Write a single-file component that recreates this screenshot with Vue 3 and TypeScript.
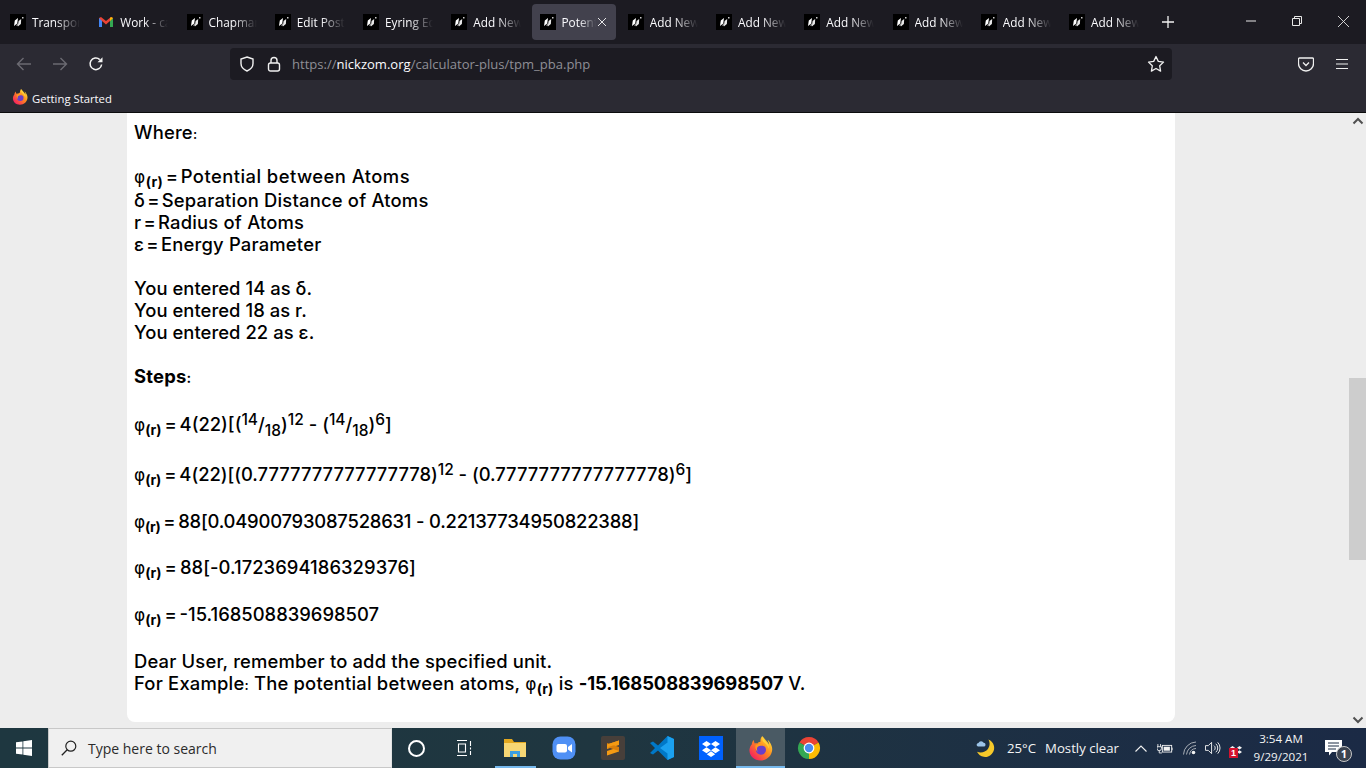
<script setup lang="ts">
interface Tab { title: string; active?: boolean; gmail?: boolean }
const tabs: Tab[] = [
  { title: 'Transport Phenomena' },
  { title: 'Work - cal', gmail: true },
  { title: 'Chapman Enskog' },
  { title: 'Edit Post' },
  { title: 'Eyring Equation' },
  { title: 'Add New Post' },
  { title: 'Potential', active: true },
  { title: 'Add New Post' },
  { title: 'Add New Post' },
  { title: 'Add New Post' },
  { title: 'Add New Post' },
  { title: 'Add New Post' },
  { title: 'Add New Post' }
]
</script>

<template>
  <div class="screen">
    <header class="chrome">
      <div class="tabbar">
        <div class="tabs">
          <div v-for="(t, i) in tabs" :key="i" class="tab" :class="{ active: t.active }">
            <svg v-if="t.gmail" class="fav" viewBox="0 0 16 16">
              <path d="M1 13V4l2-1 5 4 5-4 2 1v9h-3V7L8 10.500 4 7v6z" fill="#ea4335" />
              <path d="M1 13V4l3 3v6z" fill="#4285f4" />
              <path d="M12 13V7l3-3v9z" fill="#34a853" />
              <path d="M12 7l3-3-2-1-1 1z" fill="#fbbc04" />
            </svg>
            <svg v-else class="fav" viewBox="0 0 16 16">
              <rect width="16" height="16" fill="#000" />
              <path d="M4 12l.8-5.500L8 4l-.8 5.500z" fill="#fff" />
              <path d="M7.800 12.500l.8-5.500 2.600-2-.3 5z" fill="#e8e8e8" />
              <path d="M6 11.500l2-2.500v3z" fill="#999" />
              <rect x="12" y="3" width="1.500" height="1.500" fill="#ccc" />
            </svg>
            <span class="tab-title">{{ t.title }}</span>
            <svg v-if="t.active" class="tab-x" viewBox="0 0 10 10">
              <path d="M1 1l8 8M9 1l-8 8" stroke="#e6e6e8" stroke-width="1" fill="none" />
            </svg>
          </div>
          <svg class="plus" viewBox="0 0 12 12">
            <path d="M6 0v12M0 6h12" stroke="#f2f2f2" stroke-width="1.300" />
          </svg>
        </div>
        <div class="winctl">
          <div class="winbtn">
            <svg viewBox="0 0 10 10" width="10" height="10"><path d="M0 5h10" stroke="#e8e8e8" /></svg>
          </div>
          <div class="winbtn">
            <svg viewBox="0 0 10 10" width="10" height="10"><path d="M.5 2.500h7v7h-7zM2.500 2.500v-2h7v7h-2" stroke="#e8e8e8" fill="none" /></svg>
          </div>
          <div class="winbtn">
            <svg viewBox="0 0 10 10" width="11" height="11"><path d="M0 0l10 10M10 0L0 10" stroke="#e8e8e8" stroke-width=".8" /></svg>
          </div>
        </div>
      </div>

      <div class="toolbar">
        <div class="nav">
          <svg class="navi" viewBox="0 0 16 16"><path d="M15 8H1.500M7.500 2L1.500 8l6 6" stroke="#6b6a72" stroke-width="1.400" fill="none" /></svg>
          <svg class="navi" viewBox="0 0 16 16"><path d="M1 8h13.500M8.500 2l6 6-6 6" stroke="#6b6a72" stroke-width="1.400" fill="none" /></svg>
          <svg class="navi" viewBox="0 0 16 16">
            <path d="M13.600 8.500A5.800 5.800 0 1 1 11.800 3.600" stroke="#f4f4f4" stroke-width="1.500" fill="none" />
            <path d="M14.500 1.200v5h-5z" fill="#f4f4f4" />
          </svg>
        </div>
        <div class="urlbar">
          <svg class="url-i shield" viewBox="0 0 16 16"><path d="M8 1l6 2v4.500c0 3.500-2.500 6-6 7.500-3.500-1.500-6-4-6-7.500V3z" stroke="#f0f0f0" stroke-width="1.400" fill="none" /></svg>
          <svg class="url-i lock" viewBox="0 0 14 16">
            <rect x="1.500" y="7" width="11" height="8" rx="2" stroke="#f0f0f0" stroke-width="1.400" fill="none" />
            <path d="M4 7V4.500a3 3 0 0 1 6 0V7" stroke="#f0f0f0" stroke-width="1.400" fill="none" />
          </svg>
          <span class="url"><span class="dim">https://</span>nickzom.org<span class="dim">/calculator-plus/tpm_pba.php</span></span>
          <svg class="star" viewBox="0 0 18 18"><path d="M9 1.500l2.300 4.900 5.200.7-3.800 3.700.9 5.300L9 13.500l-4.600 2.600.9-5.300L1.500 7.100l5.200-.7z" stroke="#f0f0f0" stroke-width="1.300" fill="none" stroke-linejoin="round" /></svg>
        </div>
        <div class="tool-right">
          <svg class="pocket" viewBox="0 0 16 16">
            <path d="M1.500 2h13a1 1 0 0 1 1 1v4.500a7.500 7.500 0 0 1-15 0V3a1 1 0 0 1 1-1z" stroke="#f0f0f0" stroke-width="1.300" fill="none" />
            <path d="M5 6.500l3 3 3-3" stroke="#f0f0f0" stroke-width="1.300" fill="none" />
          </svg>
          <svg class="burger" viewBox="0 0 14 12"><path d="M1 1.500h12M1 6h12M1 10.500h12" stroke="#f0f0f0" stroke-width="1.200" /></svg>
        </div>
      </div>

      <div class="bookmarks">
        <svg class="ff-small" viewBox="0 0 32 32">
          <use href="#ffx" />
        </svg>
        <span>Getting Started</span>
      </div>
    </header>

    <main class="page">
      <article class="card">
        <p class="ln">Where<span class="colon">:</span></p>
        <p class="ln blank"></p>
        <p class="ln ln-phi"><span class="tight"><span class="phi">φ</span><sub class="sb">(r)</sub> = </span>Potential between Atoms</p>
        <p class="ln"><span class="tight">δ = </span>Separation Distance of Atoms</p>
        <p class="ln"><span class="tight">r = </span>Radius of Atoms</p>
        <p class="ln"><span class="tight">ε = </span>Energy Parameter</p>
        <p class="ln blank"></p>
        <p class="ln narrow">You entered 14 as δ.</p>
        <p class="ln narrow">You entered 18 as r.</p>
        <p class="ln narrow">You entered 22 as ε.</p>
        <p class="ln blank"></p>
        <p class="ln"><strong>Steps<span class="colon">:</span></strong></p>
        <p class="ln blank"></p>
        <p class="eq e1"><span class="tight2"><span class="phi">φ</span><sub class="sb">(r)</sub> = </span>4(22)[(<sup>14</sup>/<sub>18</sub>)<sup>12</sup> - (<sup>14</sup>/<sub>18</sub>)<sup>6</sup>]</p>
        <p class="eq e2"><span class="tight2"><span class="phi">φ</span><sub class="sb">(r)</sub> = </span>4(22)[(0.7777777777777778)<sup>12</sup> - (0.7777777777777778)<sup>6</sup>]</p>
        <p class="eq e3"><span class="tight2"><span class="phi">φ</span><sub class="sb">(r)</sub> = </span>88[0.04900793087528631 - 0.22137734950822388]</p>
        <p class="eq e4"><span class="tight2"><span class="phi">φ</span><sub class="sb">(r)</sub> = </span>88[-0.1723694186329376]</p>
        <p class="eq e5"><span class="tight2"><span class="phi">φ</span><sub class="sb">(r)</sub> = </span>-15.168508839698507</p>
        <p class="ln dear">Dear User, remember to add the specified unit.</p>
        <p class="ln example">For Example<span class="colon">:</span> The potential between atoms, <span class="phi">φ</span><sub class="sb">(r)</sub> is <strong>-15.168508839698507</strong> V.</p>
      </article>
      <aside class="scrollbar">
        <svg class="sc-arrow" viewBox="0 0 12 8"><path d="M1.500 6.500L6 2l4.500 4.500" stroke="#505050" stroke-width="2" fill="none" /></svg>
        <div class="track"><div class="thumb"></div></div>
        <svg class="sc-arrow" viewBox="0 0 12 8"><path d="M1.500 1.500L6 6l4.500-4.500" stroke="#505050" stroke-width="2" fill="none" /></svg>
      </aside>
    </main>

    <footer class="taskbar">
      <div class="start">
        <svg viewBox="0 0 16 16" width="16" height="16"><path d="M0 2.300l6.500-.9v6.200H0zM7.300 1.300L16 0v7.600H7.300zM0 8.400h6.500v6.200L0 13.700zM7.300 8.400H16V16l-8.700-1.200z" fill="#fff" /></svg>
      </div>
      <div class="search">
        <svg viewBox="0 0 16 16" width="16" height="16"><circle cx="9.800" cy="6.200" r="5" stroke="#222" stroke-width="1.200" fill="none" /><path d="M6.200 9.800L.8 15.200" stroke="#222" stroke-width="1.300" /></svg>
        <span>Type here to search</span>
      </div>
      <div class="tb-sys"><span class="cortana"></span></div>
      <div class="tb-sys">
        <svg viewBox="0 0 16 16" width="16" height="16">
          <path d="M1 .5h10M1 15.500h10M2.500 4h7v8h-7z" stroke="#fff" stroke-width="1.100" fill="none" />
          <path d="M14.500 1v14" stroke="#fff" stroke-width="1.100" stroke-dasharray="5 1.500 2 1.500 5" />
        </svg>
      </div>
      <div class="tb-btn open first">
        <svg viewBox="0 0 24 22" width="24" height="22">
          <path d="M1 2h8l2 3h12v4H1z" fill="#e3a81f" />
          <path d="M1 6h22v14H1z" fill="#f7d774" />
          <path d="M7 20v-6h10v6h-3v-3h-4v3z" fill="#3d9fe0" />
        </svg>
      </div>
      <div class="tb-btn">
        <svg viewBox="0 0 24 24" width="24" height="24">
          <rect width="23" height="23" x=".5" y=".5" rx="8" fill="#4f90f5" />
          <rect x="4.500" y="8" width="10.500" height="8.500" rx="2" fill="#fff" />
          <path d="M16 11l4-3v8.500l-4-3z" fill="#fff" />
        </svg>
      </div>
      <div class="tb-btn">
        <svg viewBox="0 0 24 24" width="24" height="24">
          <rect width="24" height="24" rx="2" fill="#473f3a" />
          <path d="M18 4.500L6 8.500v4.500l12-4zM18 11L6 15v4.500l12-4z" fill="#f59a13" />
          <path d="M6 11l12 4v-4L6 7z" fill="#d97e0b" />
          <path d="M18 4.500L6 8.500v3l12-4z" fill="#f59a13" />
        </svg>
      </div>
      <div class="tb-btn">
        <svg viewBox="0 0 24 24" width="24" height="24">
          <path d="M17.500 0L8 9.500 3 5.500 0 7l5 5-5 5 3 1.500 5-4L17.500 24l6.500-3V3z" fill="#0078c8" />
          <path d="M17.500 0L24 3v18l-6.500 3V6.500L10 12l7.500 5.500z" fill="#1ba1f0" />
        </svg>
      </div>
      <div class="tb-btn">
        <svg viewBox="0 0 24 24" width="24" height="24">
          <rect width="24" height="24" fill="#0061fe" />
          <path d="M7.500 5l4.500 3-4.500 3L3 8zM16.500 5L21 8l-4.500 3L12 8zM7.500 11.200l4.500 3-4.500 3-4.500-3zM16.500 11.200l4.500 3-4.500 3-4.500-3zM7.800 18.200l4.200-3 4.200 3-4.200 2.800z" fill="#fff" />
        </svg>
      </div>
      <div class="tb-btn open active">
        <svg viewBox="0 0 32 32" width="25" height="25">
          <defs>
            <linearGradient id="ffg" x1="0.900" y1="0.100" x2="0.150" y2="0.900">
              <stop offset="0" stop-color="#ffe13a" />
              <stop offset="0.450" stop-color="#ff8a1e" />
              <stop offset="1" stop-color="#f5215f" />
            </linearGradient>
            <g id="ffx">
              <path d="M30 12c-1-3-3-6-5-7 1 2 2 4 2 6-2-4-5-6-8-10-.2-.3-.3-.5-.5-1-1.500 1-3 4-2.500 7.500-2 0-3 1-4 2-1.500-.6-2.500-.3-3.500.2C8 8 7.500 6.500 7.500 5 5.500 6.500 5 9 4.800 11c-1 1-2.500 3-3 7C1.800 26 8 31.500 16 31.500S31 25 31 17c0-2-.4-3.500-1-5z" fill="url(#ffg)" />
              <circle cx="16.500" cy="17.500" r="6.500" fill="#6a3ec9" />
              <path d="M9.500 12c2-1.500 5-2.500 7.500-2 3 .5 5 2 6 5-1.500-2-4-3-7-2.500-2 .4-3 1-4 2-1 2-.5 4 .5 6-2.500-2-3.500-5.500-3-8.500z" fill="#ff9a1f" />
              <path d="M19 1c1 4 4 6 6 9 1.500 2 2 4 1.500 6-1-3-3-6-6-8-2-1.500-3-4-1.500-7z" fill="#ffd43a" />
            </g>
          </defs>
          <use href="#ffx" />
        </svg>
      </div>
      <div class="tb-btn">
        <svg viewBox="0 0 24 24" width="24" height="24">
          <path d="M12 12L21.530 6.500A11 11 0 0 0 2.470 6.500z" fill="#ea4335" />
          <path d="M12 12L12 23A11 11 0 0 0 21.530 6.500z" fill="#fbbc04" />
          <path d="M12 12L2.470 6.500A11 11 0 0 0 12 23z" fill="#34a853" />
          <circle cx="12" cy="12" r="5.400" fill="#fff" />
          <circle cx="12" cy="12" r="4.200" fill="#4a8cf0" />
        </svg>
      </div>

      <div class="tray">
        <div class="weather">
          <svg viewBox="0 0 22 20" width="21" height="19">
            <path d="M13 .5a9.500 9.500 0 1 1-12 13c4 1.500 9 .5 11.500-3S14.500 3 13 .5z" fill="#f6c92a" />
            <path d="M2 8a2 2 0 0 1 .5-3.900A3 3 0 0 1 8 4a2 2 0 0 1 0 4z" fill="#9cc4e8" />
          </svg>
          <span class="temp">25°C</span>
          <span>Mostly clear</span>
        </div>
        <svg class="chev" viewBox="0 0 12 7"><path d="M.5 6.500L6 1l5.500 5.500" stroke="#f2f2f2" stroke-width="1.100" fill="none" /></svg>
        <svg class="t-i batt" viewBox="0 0 18 12">
          <path d="M1 1v3M4 1v3M0 4h5v2a2 2 0 0 1-5 0zM2.500 8v3h3" stroke="#f2f2f2" stroke-width="1" fill="none" />
          <rect x="6" y="2.500" width="10.500" height="7.500" stroke="#f2f2f2" fill="none" />
          <rect x="7.500" y="4" width="7" height="4.500" fill="#f2f2f2" />
          <path d="M17 5v3" stroke="#f2f2f2" />
        </svg>
        <svg class="t-i wifi" viewBox="0 0 14 14">
          <path d="M.5 13.500A13 13 0 0 1 13 1M3.500 13.500A10 10 0 0 1 13 4.500M6.500 13.500A7 7 0 0 1 13 7.500" stroke="#a8aeb6" fill="none" />
          <circle cx="10.500" cy="11.500" r="1.800" fill="#f2f2f2" />
        </svg>
        <svg class="t-i vol" viewBox="0 0 17 14">
          <path d="M.5 4.500h3L7 1v12L3.500 9.500h-3z" stroke="#f2f2f2" fill="none" />
          <path d="M9.500 4.500a3 3 0 0 1 0 5M11.500 2.500a6 6 0 0 1 0 9M13.500 1a8.500 8.500 0 0 1 0 12" stroke="#f2f2f2" fill="none" />
        </svg>
        <div class="t-i drop">
          <svg viewBox="0 0 16 9" width="16" height="9">
            <path d="M3.500 0L6 1.800 3.500 3.600 1 1.800zM10.500 0L13 1.800l-2.500 1.800L8 1.800zM3.500 4.200L6 6 3.500 7.800 1 6zM10.500 4.200L13 6l-2.500 1.800L8 6z" fill="#f2f2f2" />
          </svg>
          <span class="drop-badge">1</span>
        </div>
        <div class="clock"><span>3:54 AM</span><span>9/29/2021</span></div>
        <div class="notif">
          <svg viewBox="0 0 17 16" width="17" height="16"><path d="M0 0h17v12H7l-3 3.500V12H0z" fill="#fff" /><path d="M3 3h11M3 6h11M3 9h8" stroke="#1c2d45" /></svg>
          <span class="notif-n">1</span>
        </div>
      </div>
    </footer>
  </div>
</template>

<style scoped>
.screen {
  width: 1366px;
  height: 768px;
  display: flex;
  flex-direction: column;
  overflow: hidden;
  font-family: "Open Sans", "Noto Sans", sans-serif;
}
.chrome {
  flex: none;
  height: 113px;
  background: #2b2a33;
  border-bottom: 1px solid #0c0c0d;
  box-sizing: border-box;
  color: #fbfbfe;
}
.tabbar {
  height: 44px;
  background: #1c1b22;
  display: flex;
  justify-content: space-between;
}
.tabs {
  display: flex;
  align-items: center;
  padding-left: 2px;
}
.tab {
  width: 84.250px;
  height: 36px;
  margin-right: 4px;
  border-radius: 4px;
  display: flex;
  align-items: center;
  padding-left: 8px;
  box-sizing: border-box;
  font-size: 11.800px;
  position: relative;
}
.tab.active {
  background: #42414d;
}
.fav {
  width: 16px;
  height: 16px;
  flex: none;
}
.tab-title {
  margin-left: 6px;
  width: 48px;
  overflow: hidden;
  white-space: nowrap;
  -webkit-mask-image: linear-gradient(to right, #000 50%, transparent 100%);
  mask-image: linear-gradient(to right, #000 50%, transparent 100%);
}
.tab.active .tab-title {
  width: 34px;
}
.tab-x {
  width: 10px;
  height: 10px;
  margin-left: 1px;
}
.plus {
  width: 12px;
  height: 12px;
  margin-left: 13px;
}
.winctl {
  display: flex;
}
.winbtn {
  width: 46px;
  height: 44px;
  display: flex;
  align-items: center;
  justify-content: center;
  padding-bottom: 2px;
  box-sizing: border-box;
}
.toolbar {
  height: 40px;
  display: flex;
  align-items: center;
}
.nav {
  width: 230px;
  flex: none;
  display: flex;
  gap: 20px;
  padding-left: 16px;
  box-sizing: border-box;
}
.navi {
  width: 16px;
  height: 16px;
}
.urlbar {
  width: 942px;
  height: 32px;
  background: #1c1b22;
  border-radius: 4px;
  display: flex;
  align-items: center;
  padding: 0 7px 0 9px;
  box-sizing: border-box;
}
.url-i {
  flex: none;
}
.shield {
  width: 16px;
  height: 16px;
}
.lock {
  width: 14px;
  height: 16px;
  margin-left: 12px;
}
.url {
  margin-left: 11px;
  font-size: 13.050px;
  flex: 1;
}
.dim {
  color: #8f8f96;
}
.star {
  width: 18px;
  height: 18px;
}
.tool-right {
  flex: 1;
  display: flex;
  align-items: center;
  padding-left: 126px;
  gap: 21px;
}
.pocket {
  width: 16px;
  height: 16px;
}
.burger {
  width: 14px;
  height: 12px;
}
.bookmarks {
  height: 28px;
  display: flex;
  align-items: center;
  padding-left: 12px;
  gap: 4px;
  font-size: 11.300px;
}
.ff-small {
  width: 16px;
  height: 16px;
  margin-top: -3px;
}
.page {
  flex: 1;
  min-height: 0;
  background: #ededed;
  display: flex;
  overflow: hidden;
}
.card {
  margin-left: 127px;
  width: 1048px;
  height: 609px;
  flex: none;
  background: #fff;
  border-radius: 0 0 8px 8px;
  padding: 8px 7px 0;
  box-sizing: border-box;
  color: #000;
  font-family: Inter, "Open Sans", sans-serif;
  font-size: 18.400px;
  font-weight: 500;
  letter-spacing: 0.200px;
}
.ln {
  margin: 0;
  height: 22px;
  line-height: 22px;
  white-space: nowrap;
}
.ln-phi {
  height: 24px;
  letter-spacing: 0.450px;
}
.narrow {
  letter-spacing: 0.050px;
}
.dear {
  letter-spacing: 0.170px;
}
.example {
  letter-spacing: 0.200px;
}
.example strong {
  letter-spacing: -0.100px;
}
.tight {
  word-spacing: -3px;
}
.tight2 {
  word-spacing: -2px;
}
.colon {
  font-size: 14px;
}
.phi {
  font-family: "DejaVu Sans", sans-serif;
  font-size: 17px;
  font-weight: 400;
}
.sb {
  font-size: 14px;
  font-weight: 700;
  line-height: 0;
  vertical-align: -4px;
}
.eq {
  margin: 0;
  white-space: nowrap;
  line-height: 22px;
  height: 22px;
  letter-spacing: 0;
}
.eq sup {
  font-size: 15.500px;
  line-height: 0;
  vertical-align: 6px;
}
.eq sub:not(.sb) {
  font-size: 15.500px;
  line-height: 0;
  vertical-align: -5px;
}
.e1 { margin-top: 4px; }
.e2 { margin-top: 28px; letter-spacing: -0.030px; }
.e3 { margin-top: 25px; letter-spacing: -0.200px; }
.e4 { margin-top: 24px; letter-spacing: 0.050px; }
.e5 { margin-top: 25px; margin-bottom: 25px; }
.scrollbar {
  width: 17px;
  margin-left: auto;
  display: flex;
  flex-direction: column;
  align-items: center;
}
.sc-arrow {
  flex: none;
  width: 12px;
  height: 8px;
  margin: 4px 0;
}
.track {
  flex: 1;
  width: 100%;
}
.thumb {
  margin-top: 249px;
  height: 182px;
  background: #cdcdcd;
}
.taskbar {
  flex: none;
  height: 40px;
  background: linear-gradient(to right, #1e3740 0%, #1f3640 45%, #1c2d45 85%, #1b2a45 100%);
  display: flex;
  align-items: center;
  font-family: "Open Sans", "Noto Sans", sans-serif;
  color: #f4f4f4;
}
.start {
  width: 48px;
  height: 40px;
  display: flex;
  align-items: center;
  justify-content: center;
}
.search {
  width: 344px;
  height: 40px;
  background: #f0f0f0;
  border: 1px solid #c8c8c8;
  border-right-color: #e2e2e2;
  box-sizing: border-box;
  display: flex;
  align-items: center;
  padding-left: 12px;
  gap: 11px;
  color: #2b2b2b;
  font-size: 14px;
}
.tb-sys {
  width: 48px;
  height: 40px;
  display: flex;
  align-items: center;
  justify-content: center;
}
.tb-btn {
  width: 49px;
  height: 40px;
  display: flex;
  align-items: center;
  justify-content: center;
  box-sizing: border-box;
  position: relative;
}
.tb-btn.first {
  margin-left: 2.500px;
}
.cortana {
  width: 13px;
  height: 13px;
  border: 2px solid #fff;
  border-radius: 50%;
}
.tb-btn.open::after {
  content: "";
  position: absolute;
  bottom: 0;
  left: 4px;
  right: 4px;
  height: 2px;
  background: #76b9ed;
}
.tb-btn.active {
  background: #4a5a64;
}
.tb-btn.active::after {
  left: 0;
  right: 0;
}
.tray {
  margin-left: auto;
  display: flex;
  align-items: center;
  height: 40px;
}
.weather {
  display: flex;
  align-items: center;
  margin-right: 16px;
  font-size: 13.200px;
}
.weather svg {
  flex: none;
}
.temp {
  margin: 0 9px 0 10px;
}
.chev {
  width: 12px;
  height: 7px;
  margin-right: 10px;
}
.t-i {
  flex: none;
}
.batt {
  width: 16px;
  height: 11px;
  margin-right: 10px;
}
.wifi {
  width: 14px;
  height: 14px;
  margin-right: 8px;
}
.vol {
  width: 16px;
  height: 14px;
  margin-right: 8px;
}
.drop {
  width: 16px;
  height: 20px;
  position: relative;
  margin-right: 9px;
}
.drop-badge {
  position: absolute;
  left: 0;
  bottom: 0;
  width: 9px;
  height: 10px;
  background: #d4122e;
  color: #fff;
  font: 700 9px/10px "Liberation Sans", sans-serif;
  text-align: center;
}
.clock {
  width: 54px;
  display: flex;
  flex-direction: column;
  align-items: center;
  font-size: 11.600px;
  line-height: 18px;
  white-space: nowrap;
}
.notif {
  width: 58px;
  height: 40px;
  display: flex;
  align-items: center;
  justify-content: center;
  position: relative;
  padding-right: 8px;
  box-sizing: border-box;
}
.notif-n {
  position: absolute;
  left: 28px;
  top: 18px;
  width: 14px;
  height: 14px;
  border: 1px solid #c8c8c8;
  background: #3b4350;
  border-radius: 50%;
  color: #fff;
  font: 700 11px/14px "Open Sans", sans-serif;
  text-align: center;
}
</style>
